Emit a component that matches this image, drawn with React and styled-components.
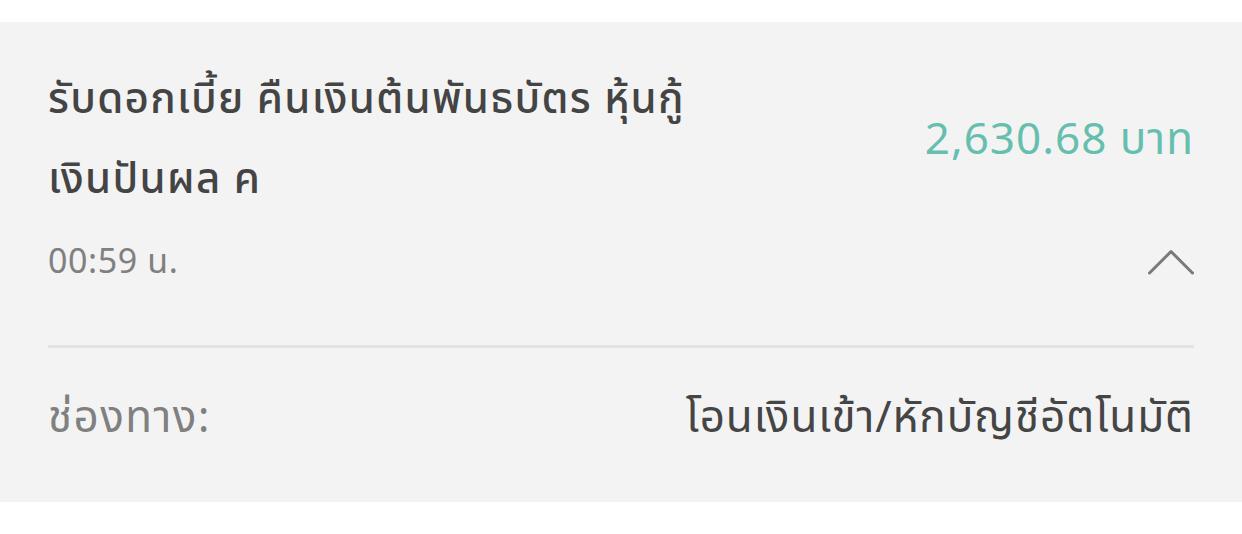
import styled, { createGlobalStyle } from "styled-components";

const GlobalStyle = createGlobalStyle`
  body {
    margin: 0;
    background: #fff;
    font-family: "Noto Sans Thai", "Noto Sans", "Liberation Sans", sans-serif;
  }
`;

function ChevronUp() {
  return (
    <svg width="46" height="26" viewBox="0 0 46 26" fill="none">
      <path
        d="M1.5 24 L23 2.5 L44.5 24"
        stroke="#7a7a7a"
        strokeWidth="3"
        strokeLinecap="round"
        strokeLinejoin="round"
      />
    </svg>
  );
}

export default function App() {
  return (
    <Page>
      <GlobalStyle />
      <Card>
        <Header>
          <Title>
            รับดอกเบี้ย คืนเงินต้นพันธบัตร หุ้นกู้
            <br />
            เงินปันผล ค
          </Title>
          <Amount>2,630.68 บาท</Amount>
        </Header>
        <MetaRow>
          <Time>00:59 น.</Time>
          <ChevronUp />
        </MetaRow>
        <Divider />
        <DetailRow>
          <Label>ช่องทาง:</Label>
          <Value>โอนเงินเข้า/หักบัญชีอัตโนมัติ</Value>
        </DetailRow>
      </Card>
    </Page>
  );
}

const Page = styled.div`
  padding-top: 22px;
  min-height: 534px;
  box-sizing: border-box;
`;
const Card = styled.div`
  background: #f3f3f3;
  padding: 38px 48px 52px;
  height: 480px;
  box-sizing: border-box;
`;
const Header = styled.div`
  display: flex;
  justify-content: space-between;
  align-items: center;
`;
const Title = styled.div`
  font-size: 42px;
  font-weight: 500;
  letter-spacing: 1.3px;
  line-height: 80px;
  color: #444;
`;
const Amount = styled.div`
  font-size: 44px;
  letter-spacing: 1px;
  color: #66bfae;
  white-space: nowrap;
`;
const MetaRow = styled.div`
  display: flex;
  justify-content: space-between;
  align-items: center;
  height: 40px;
  margin-top: 22px;
`;
const Time = styled.span`
  font-size: 34px;
  letter-spacing: 0.6px;
  color: #808080;
`;
const Divider = styled.div`
  margin-top: 63px;
  border-top: 3px solid #e3e3e3;
`;
const DetailRow = styled.div`
  display: flex;
  justify-content: space-between;
  align-items: center;
  height: 60px;
  margin-top: 40px;
`;
const Label = styled.span`
  font-size: 44px;
  letter-spacing: 1.4px;
  color: #808080;
`;
const Value = styled.span`
  font-size: 44px;
  letter-spacing: 0.9px;
  color: #454545;
`;
